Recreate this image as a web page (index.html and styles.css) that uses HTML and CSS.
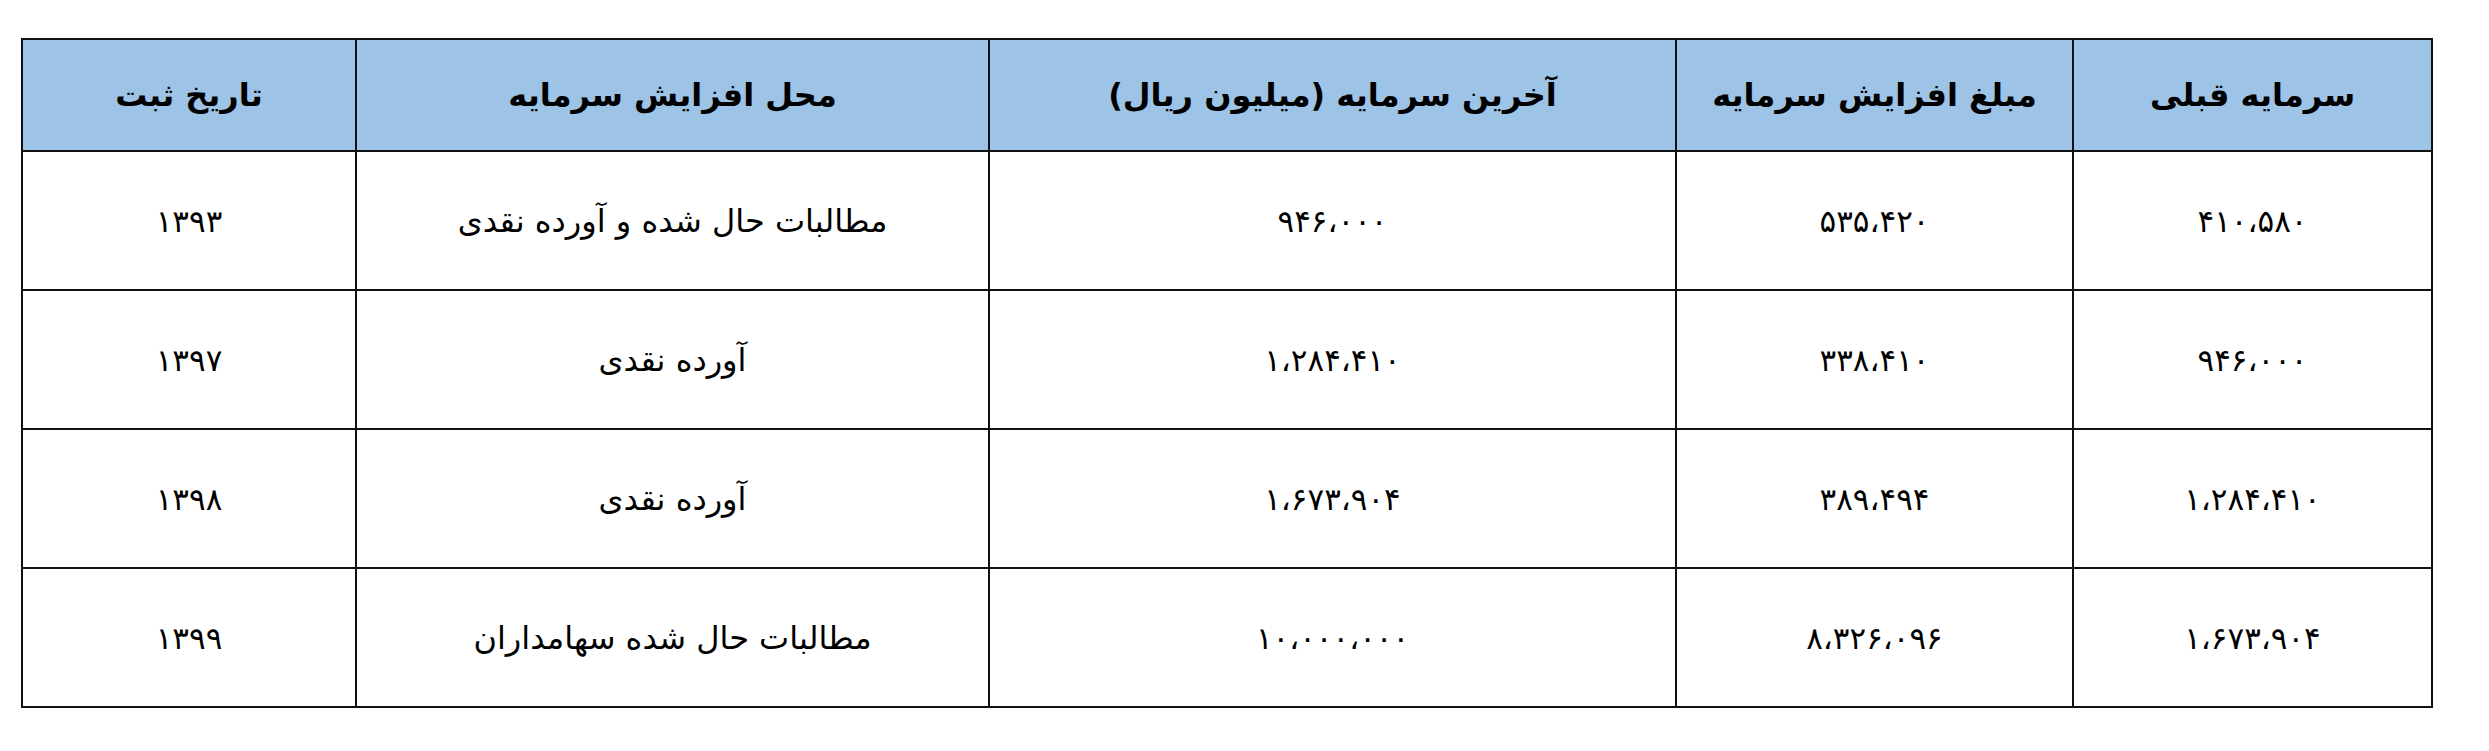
FILE: index.html
```html
<!DOCTYPE html>
<html lang="fa" dir="rtl">
<head>
<meta charset="utf-8">
<title>افزایش سرمایه</title>
<link rel="stylesheet" href="styles.css">
</head>
<body>
<table class="capital">
  <colgroup>
    <col class="c1"><col class="c2"><col class="c3"><col class="c4"><col class="c5">
  </colgroup>
  <thead>
    <tr class="head">
      <th>سرمایه قبلی</th>
      <th>مبلغ افزایش سرمایه</th>
      <th>آخرین سرمایه (میلیون ریال)</th>
      <th>محل افزایش سرمایه</th>
      <th>تاریخ ثبت</th>
    </tr>
  </thead>
  <tbody>
    <tr>
      <td class="num">۴۱۰،۵۸۰</td>
      <td class="num">۵۳۵،۴۲۰</td>
      <td class="num">۹۴۶،۰۰۰</td>
      <td class="txt">مطالبات حال شده و آورده نقدی</td>
      <td class="num">۱۳۹۳</td>
    </tr>
    <tr>
      <td class="num">۹۴۶،۰۰۰</td>
      <td class="num">۳۳۸،۴۱۰</td>
      <td class="num">۱،۲۸۴،۴۱۰</td>
      <td class="txt">آورده نقدی</td>
      <td class="num">۱۳۹۷</td>
    </tr>
    <tr>
      <td class="num">۱،۲۸۴،۴۱۰</td>
      <td class="num">۳۸۹،۴۹۴</td>
      <td class="num">۱،۶۷۳،۹۰۴</td>
      <td class="txt">آورده نقدی</td>
      <td class="num">۱۳۹۸</td>
    </tr>
    <tr>
      <td class="num">۱،۶۷۳،۹۰۴</td>
      <td class="num">۸،۳۲۶،۰۹۶</td>
      <td class="num">۱۰،۰۰۰،۰۰۰</td>
      <td class="txt">مطالبات حال شده سهامداران</td>
      <td class="num">۱۳۹۹</td>
    </tr>
  </tbody>
</table>
</body>
</html>
```

FILE: styles.css
```css
html, body {
  margin: 0;
  padding: 0;
  background: #ffffff;
}
body {
  padding: 38px 56px 0 23px;
  font-family: "DejaVu Sans", "Noto Sans", sans-serif;
  color: #000;
}
.capital {
  width: 2410px;
  table-layout: fixed;
  border-collapse: collapse;
  direction: rtl;
}
.c1 { width: 359px; }
.c2 { width: 397px; }
.c3 { width: 687px; }
.c4 { width: 633px; }
.c5 { width: 334px; }
.capital th,
.capital td {
  border: 2px solid #111;
  text-align: center;
  vertical-align: middle;
  padding: 0;
}
.capital th {
  background: #9dc3e6;
  height: 110px;
  font-size: 32px;
  font-weight: bold;
}
.capital td {
  height: 137px;
  font-weight: normal;
}
.capital td.txt {
  font-size: 32px;
}
.capital td.num {
  font-size: 31px;
  letter-spacing: 1px;
}
```
